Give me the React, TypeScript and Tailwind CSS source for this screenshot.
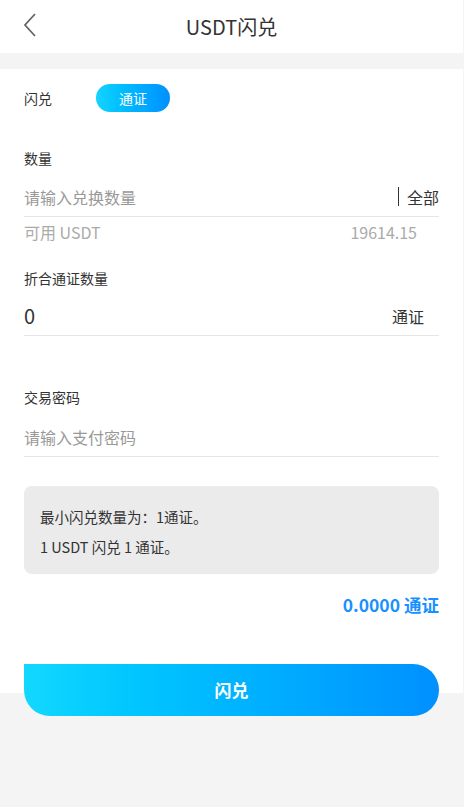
import React from 'react';

const font = { fontFamily: '"Noto Sans CJK SC", "Noto Sans", sans-serif' };

const Field = ({ label, children }: { label: string; children: React.ReactNode }) => (
  <div>
    <p className="text-[14px] leading-5 text-[#333]">{label}</p>
    {children}
  </div>
);

const App = () => {
  return (
    <div style={font} className="min-h-[807px] w-[464px] bg-[#f4f4f4]">
      <div className="w-[463px]">
        {/* header */}
        <div className="relative flex h-[53px] items-center justify-center bg-white">
          <button className="absolute left-[21px] top-[11px] outline-none">
            <svg width="20" height="28" viewBox="0 0 20 28" fill="none">
              <path d="M14 3 L4 14 L14 25" stroke="#666" strokeWidth="1.8" />
            </svg>
          </button>
          <h1 className="text-[20px] text-[#333]">USDT闪兑</h1>
        </div>

        <div className="mt-4 flow-root bg-white px-6 pt-[15px]">
          <div className="flex items-center">
            <p className="w-[72px] text-[14px] text-[#333]">闪兑</p>
            <span className="flex h-[28px] w-[74px] items-center justify-center rounded-full bg-gradient-to-r from-[#14d4ff] to-[#0090ff] text-[14px] text-white">
              通证
            </span>
          </div>

          <div className="mt-9">
            <Field label="数量">
              <div className="mt-[9px] flex h-[40px] items-center border-b border-[#e5e5e5]">
                <span className="flex-1 text-[16px] text-[#999]">请输入兑换数量</span>
                <span className="mr-2 h-[19px] w-px bg-[#333]" />
                <span className="text-[16px] text-[#333]">全部</span>
              </div>
            </Field>
            <div className="mt-[5px] flex items-center justify-between pr-[22px] text-[16px] leading-5 text-[#aaa]">
              <span>可用 USDT</span>
              <span>19614.15</span>
            </div>
          </div>

          <div className="mt-[26px]">
            <Field label="折合通证数量">
              <div className="mt-2 flex h-[40px] items-center border-b border-[#e5e5e5] pr-[15px]">
                <span className="flex-1 text-[20px] text-[#333]">0</span>
                <span className="text-[16px] text-[#333]">通证</span>
              </div>
            </Field>
          </div>

          <div className="mt-[51px]">
            <Field label="交易密码">
              <div className="mt-[10px] flex h-[40px] items-center border-b border-[#e5e5e5]">
                <span className="text-[16px] text-[#999]">请输入支付密码</span>
              </div>
            </Field>
          </div>

          <div className="mt-[29px] rounded-lg bg-[#ebebeb] px-4 pb-3 pt-4 text-[14.5px] leading-[30px] text-[#333]">
            <p>最小闪兑数量为：1通证。</p>
            <p>1 USDT 闪兑 1 通证。</p>
          </div>

          <p className="mt-[19px] text-right text-[17.5px] font-bold leading-6 text-[#1890ff]">
            0.0000 通证
          </p>

          <button className="relative z-10 -mb-[23px] mt-[47px] flex h-[52px] w-full items-center justify-center rounded-bl-[26px] rounded-br-[26px] rounded-tr-[26px] bg-gradient-to-r from-[#12d8ff] to-[#0090ff] text-[17px] font-bold text-white">
            闪兑
          </button>
        </div>
      </div>
    </div>
  );
};

export default App;
